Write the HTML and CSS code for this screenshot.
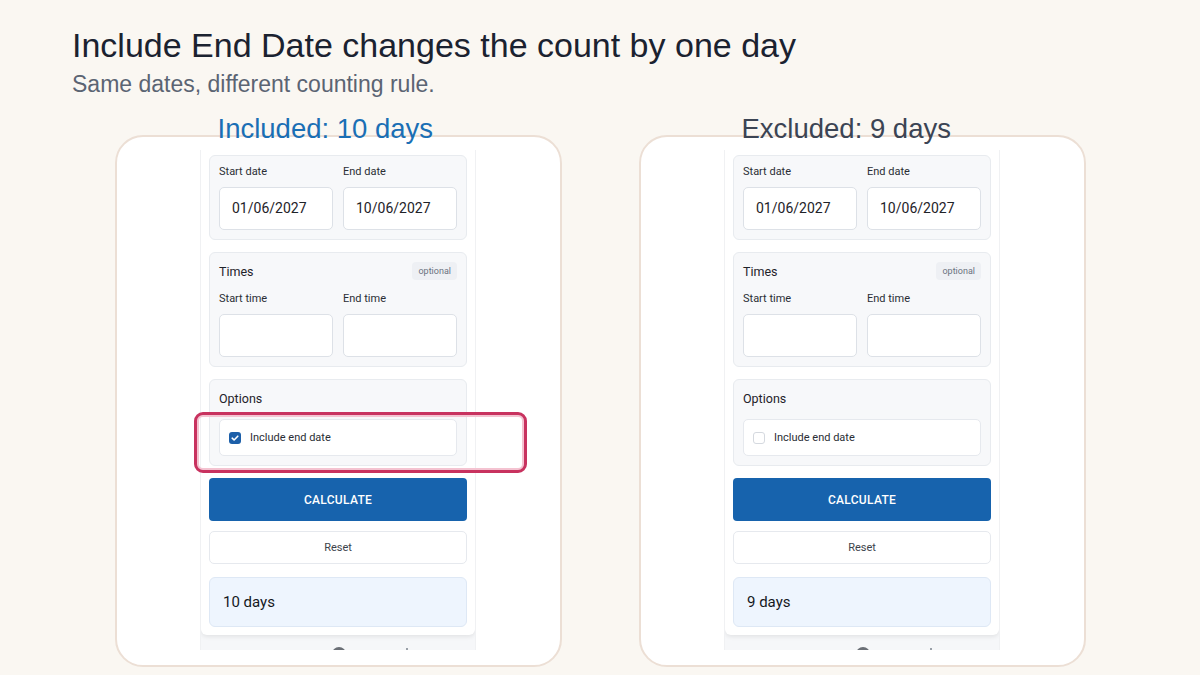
FILE: index.html
```html
<html>
  <head>
    <link rel="stylesheet" href="styles.css">
    <title>Include End Date</title>
  </head>
  <body>
    <div class="page">
      <h1 class="title">Include End Date changes the count by one day</h1>
      <p class="subtitle">Same dates, different counting rule.</p>

      <div class="compare">
        <div class="column">
          <div class="label label-on">Included: 10 days</div>
          <div class="panel">
            <div class="shot">
              <div class="form">
                <div class="card">
                  <div class="pair">
                    <div class="field">
                      <div class="field-label">Start date</div>
                      <div class="input">01/06/2027</div>
                    </div>
                    <div class="field">
                      <div class="field-label">End date</div>
                      <div class="input">10/06/2027</div>
                    </div>
                  </div>
                </div>
                <div class="card">
                  <div class="card-head">
                    <span class="card-title">Times</span>
                    <span class="badge">optional</span>
                  </div>
                  <div class="pair">
                    <div class="field">
                      <div class="field-label">Start time</div>
                      <div class="input"></div>
                    </div>
                    <div class="field">
                      <div class="field-label">End time</div>
                      <div class="input"></div>
                    </div>
                  </div>
                </div>
                <div class="card">
                  <div class="card-head">
                    <span class="card-title">Options</span>
                  </div>
                  <div class="check-row">
                    <span class="box checked">
                      <svg width="12" height="12" viewBox="0 0 12 12"><path d="M3.2 6.2 L5.1 8 L8.8 4.2" fill="none" stroke="#fff" stroke-width="1.6" stroke-linecap="round" stroke-linejoin="round"/></svg>
                    </span>
                    <span>Include end date</span>
                  </div>
                </div>
                <button class="calc">CALCULATE</button>
                <button class="reset">Reset</button>
                <div class="result">10 days</div>
              </div>
              <div class="footer">
                <span class="dot"></span>
                <span class="tick"></span>
              </div>
            </div>
            <div class="highlight"></div>
          </div>
        </div>

        <div class="column">
          <div class="label label-off">Excluded: 9 days</div>
          <div class="panel">
            <div class="shot">
              <div class="form">
                <div class="card">
                  <div class="pair">
                    <div class="field">
                      <div class="field-label">Start date</div>
                      <div class="input">01/06/2027</div>
                    </div>
                    <div class="field">
                      <div class="field-label">End date</div>
                      <div class="input">10/06/2027</div>
                    </div>
                  </div>
                </div>
                <div class="card">
                  <div class="card-head">
                    <span class="card-title">Times</span>
                    <span class="badge">optional</span>
                  </div>
                  <div class="pair">
                    <div class="field">
                      <div class="field-label">Start time</div>
                      <div class="input"></div>
                    </div>
                    <div class="field">
                      <div class="field-label">End time</div>
                      <div class="input"></div>
                    </div>
                  </div>
                </div>
                <div class="card">
                  <div class="card-head">
                    <span class="card-title">Options</span>
                  </div>
                  <div class="check-row">
                    <span class="box"></span>
                    <span>Include end date</span>
                  </div>
                </div>
                <button class="calc">CALCULATE</button>
                <button class="reset">Reset</button>
                <div class="result">9 days</div>
              </div>
              <div class="footer">
                <span class="dot"></span>
                <span class="tick"></span>
              </div>
            </div>
          </div>
        </div>
      </div>
    </div>
  </body>
</html>
```

FILE: styles.css
```css
body {
  margin: 0;
  background-color: #faf7f2;
  font-family: "Liberation Sans", Arial, sans-serif;
}

.page {
  padding: 25px 72px 0;
}

.title {
  margin: 0;
  font-size: 34px;
  font-weight: normal;
  line-height: 40px;
  color: #1b2230;
}

.subtitle {
  margin: 5px 0 0;
  font-size: 23px;
  line-height: 28px;
  color: #5b6473;
}

.compare {
  display: flex;
  justify-content: center;
  gap: 77px;
  margin-top: 16px;
}

.column {
  width: 447px;
}

.label {
  position: relative;
  z-index: 1;
  padding-left: 103px;
  font-size: 27.5px;
  line-height: 30px;
  margin-bottom: -9px;
}

.label-on {
  color: #1a6fb5;
}

.label-off {
  color: #3b4454;
}

.panel {
  position: relative;
  height: 532px;
  background-color: #ffffff;
  border: 2px solid #ecdfd5;
  border-radius: 28px;
  padding-top: 13px;
  box-sizing: border-box;
}

.shot {
  width: 276px;
  height: 500px;
  margin: 0 auto;
  overflow: hidden;
  background-color: #f6f7f9;
  border-left: 1px solid #f0f1f3;
  border-right: 1px solid #f0f1f3;
  box-sizing: border-box;
  font-family: Roboto, "Liberation Sans", sans-serif;
  color: #23272e;
}

.form {
  display: flex;
  flex-direction: column;
  padding: 5px 8px 8px;
  background-color: #ffffff;
  border-radius: 0 0 6px 6px;
  box-shadow: 0 2px 4px rgba(0, 0, 0, 0.08);
}

.card {
  background-color: #f7f8fa;
  border: 1px solid #e8ebef;
  border-radius: 6px;
  padding: 9px;
  margin-bottom: 12px;
}

.card-head {
  display: flex;
  justify-content: space-between;
  align-items: center;
  height: 18px;
  margin-bottom: 12px;
}

.card-title {
  font-size: 12.5px;
  color: #1f232a;
}

.badge {
  background-color: #eef0f4;
  color: #6b7280;
  font-size: 9px;
  line-height: 18px;
  padding: 0 6px;
  border-radius: 4px;
}

.pair {
  display: flex;
  gap: 10px;
}

.field {
  flex: 1;
}

.field-label {
  font-size: 11px;
  line-height: 14px;
  margin-bottom: 8px;
  color: #2a2e35;
}

.input {
  height: 43px;
  box-sizing: border-box;
  background-color: #ffffff;
  border: 1px solid #dde1e7;
  border-radius: 5px;
  padding-left: 12px;
  font-size: 14px;
  line-height: 41px;
  color: #1e2228;
}

.check-row {
  display: flex;
  align-items: center;
  gap: 9px;
  height: 37px;
  box-sizing: border-box;
  padding-left: 9px;
  background-color: #ffffff;
  border: 1px solid #e6e9ee;
  border-radius: 5px;
  font-size: 11px;
  color: #2a2e35;
}

.box {
  width: 12px;
  height: 12px;
  box-sizing: border-box;
  border: 1px solid #d5d9df;
  border-radius: 3px;
  background-color: #ffffff;
}

.box.checked {
  border: none;
  background-color: #1c5fa9;
}

.box svg {
  display: block;
}

.calc {
  height: 43px;
  border: none;
  border-radius: 4px;
  background-color: #1763ad;
  color: #ffffff;
  font-family: Roboto, sans-serif;
  font-size: 12px;
  font-weight: 500;
  letter-spacing: 0.3px;
  margin-bottom: 10px;
}

.reset {
  height: 33px;
  border: 1px solid #e6e9ee;
  border-radius: 5px;
  background-color: #ffffff;
  color: #3d434b;
  font-family: Roboto, sans-serif;
  font-size: 11px;
  margin-bottom: 13px;
}

.result {
  height: 50px;
  box-sizing: border-box;
  background-color: #eef5fe;
  border: 1px solid #dee8f5;
  border-radius: 6px;
  padding-left: 13px;
  font-size: 15px;
  line-height: 48px;
  color: #14181d;
}

.footer {
  display: flex;
  gap: 60px;
  padding: 12px 0 0 131px;
}

.dot {
  width: 14px;
  height: 14px;
  border-radius: 50%;
  background-color: #6b6f76;
}

.tick {
  width: 2px;
  height: 4px;
  background-color: #9aa0a8;
  margin-top: 1px;
}

.highlight {
  position: absolute;
  left: 77px;
  top: 275px;
  width: 333px;
  height: 61px;
  box-sizing: border-box;
  border: 3px solid #c8325f;
  border-radius: 9px;
  box-shadow: inset 0 0 0 2px #f4c3d1;
}
```
